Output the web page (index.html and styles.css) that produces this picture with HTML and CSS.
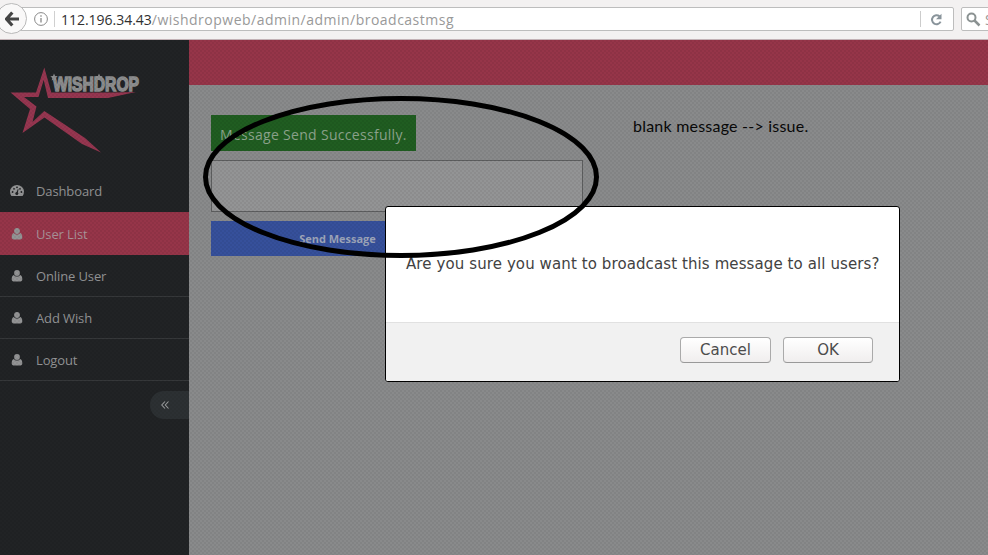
FILE: index.html
```html
<!DOCTYPE html>
<html lang="en">
<head>
<meta charset="utf-8">
<title>Wishdrop admin</title>
<link rel="stylesheet" href="styles.css">
</head>
<body>
<svg width="0" height="0" class="defs">
  <symbol id="user" viewBox="0 0 11 12"><circle cx="5.5" cy="3" r="2.9"/><path d="M2.4 4.9C.8 5.3.2 7 .2 9.3c0 1.300.7 2.200 1.900 2.200h6.800c1.200 0 1.900-.9 1.900-2.200C10.800 7 10.200 5.300 8.600 4.900 7.800 5.900 6.800 6.500 5.500 6.500S3.200 5.900 2.400 4.900Z"/></symbol>
</svg>
<header class="toolbar">
  <div class="back"><svg width="14" height="16" viewBox="0 0 14 16"><path d="M7.300 1.500 1.500 8l5.800 6.500M2 8h12" fill="none" stroke="#444" stroke-width="3.200"/></svg></div>
  <div class="address">
    <svg class="info" width="14" height="14" viewBox="0 0 14 14"><circle cx="7" cy="7" r="6.400" fill="none" stroke="#888"/><path d="M7 6v4.500M7 3.300v1.500" stroke="#888" stroke-width="1.300"/></svg>
    <div class="url"><b>112.196.34.43</b><span>/wishdropweb/admin/admin/broadcastmsg</span></div>
    <div class="reload"><svg width="13" height="13" viewBox="0 0 13 13"><path d="M9.500 3.300A4.500 4.500 0 1 0 10.600 8.600" fill="none" stroke="#89949b" stroke-width="2"/><path d="M11.500.7v5.500H6Z" fill="#89949b"/></svg></div>
  </div>
  <div class="search"><svg width="15" height="15" viewBox="0 0 15 15"><circle cx="5.500" cy="5.500" r="4" fill="none" stroke="#8b9292" stroke-width="2"/><path d="m8.500 8.500 5 5" stroke="#8b9292" stroke-width="2.500"/></svg><span>S</span></div>
</header>
<div class="page">
  <aside class="sidebar">
    <svg class="logo" width="189" height="130" viewBox="0 40 189 130">
      <path fill="#963650" fill-rule="evenodd" d="M44.300 67.500 51.300 92.500H114L136 92 108 98H48L43.700 80 38.500 97H24L36.500 106.500 32.500 122 44.300 111 85 138 101 152.500 82 144 44.500 117.500 22.500 133 30 109 10.500 92.500H36Z"/>
      <path fill="#8c8d8e" d="m54 73.500 1.100 2.400 2.600.3-2 1.800.6 2.600-2.300-1.300-2.300 1.300.6-2.600-2-1.800 2.600-.3ZM99 73.500l1.100 2.400 2.600.3-2 1.800.6 2.600-2.300-1.300-2.300 1.300.6-2.600-2-1.800 2.600-.3Z"/>
      <text class="brand" x="53" y="91.300" textLength="86" lengthAdjust="spacingAndGlyphs">WISHDROP</text>
    </svg>
    <nav>
      <a class="item"><svg width="14" height="12" viewBox="0 0 14 12"><path d="M1.500 11A7 6.800 0 1 1 12.500 11Z"/><g fill="#202224"><circle cx="2.600" cy="7" r=".9"/><circle cx="4" cy="3.800" r=".9"/><circle cx="7" cy="2.300" r=".9"/><circle cx="10" cy="3.800" r=".9"/><circle cx="11.400" cy="7" r=".9"/><circle cx="6.800" cy="8.500" r="1.500"/><path d="m6.300 8 1.500-4 .7.200-.8 4.200Z"/></g></svg><span>Dashboard</span></a>
      <a class="item active"><svg width="14" height="12"><use href="#user"/></svg><span>User List</span></a>
      <a class="item"><svg width="14" height="12"><use href="#user"/></svg><span>Online User</span></a>
      <a class="item"><svg width="14" height="12"><use href="#user"/></svg><span>Add Wish</span></a>
      <a class="item"><svg width="14" height="12"><use href="#user"/></svg><span>Logout</span></a>
    </nav>
    <div class="collapse"><svg width="8" height="8" viewBox="0 0 8 8"><path d="M4 .5.800 4 4 7.500M7.500.5 4.300 4l3.200 3.500" fill="none" stroke="#999b9c" stroke-width="1.100"/></svg></div>
  </aside>
  <main>
    <div class="topbar"></div>
    <div class="content">
      <form>
        <div class="success">Message Send Successfully.</div>
        <div class="message"></div>
        <div class="send">Send Message</div>
      </form>
      <p class="note">blank message --&gt; issue.</p>
    </div>
  </main>
</div>
<div class="texture"></div>
<div class="dialog">
  <div class="question">Are you sure you want to broadcast this message to all users?</div>
  <div class="actions"><button>Cancel</button><button>OK</button></div>
</div>
<svg class="annotation" width="396" height="162"><ellipse cx="198" cy="81" rx="195.500" ry="78.500"/></svg>
</body>
</html>
```
FILE: styles.css
```css
* { box-sizing: border-box; }
body { margin: 0; width: 988px; height: 555px; overflow: hidden; font-family: "Open Sans", sans-serif; display: flex; flex-direction: column; position: relative; background: #868788; }
.defs { position: absolute; }
.toolbar { height: 40px; flex: none; background: #f3f1f1; display: flex; align-items: flex-start; padding-top: 7px; border-bottom: 1px solid #c3b2b6; overflow: hidden; }
.back { width: 31px; height: 31px; border: 1px solid #b9b9b9; border-radius: 50%; background: #f9f8f8; margin: -4px 0 0 -4px; flex: none; display: flex; align-items: center; padding-left: 8px; z-index: 1; }
.address { height: 24px; width: 939px; margin-left: -12px; border: 1px solid #bdbdbd; border-radius: 2px; background: #fff; display: flex; align-items: center; padding-left: 18px; flex: none; }
.info { flex: none; }
.url { flex: 1; margin-left: 6px; border-left: 1px solid #d0d0d0; padding-left: 6px; height: 16px; line-height: 17px; font-size: 14px; color: #999; white-space: nowrap; }
.url b { font-weight: 400; color: #303030; letter-spacing: -.02px; }
.url span { letter-spacing: .49px; }
.reload { width: 33px; height: 16px; border-left: 1px solid #ccc; display: flex; align-items: center; padding-left: 9px; }
.search { height: 24px; width: 100px; margin-left: 7px; flex: none; border: 1px solid #bdbdbd; border-radius: 2px; background: #fff; display: flex; align-items: center; padding-left: 4px; gap: 4px; font-size: 14px; color: #999; }
.page { flex: 1; display: flex; }
.sidebar { width: 189px; background: #212325; color: #939495; display: flex; flex-direction: column; flex: none; }
.logo { display: block; flex: none; }
.brand { font: bold 20px "Liberation Sans", sans-serif; fill: #8c8d8e; stroke: #8c8d8e; stroke-width: 1.5px; }
.item { height: 42px; display: flex; align-items: center; padding-left: 10px; gap: 12px; font-size: 13px; letter-spacing: -.12px; border-bottom: 1px solid #36383a; fill: #939495; }
.item:first-child { height: 43px; border-color: #923448; }
.item.active { background: #963549; border-color: #963549; color: #a99298; }
.item svg { flex: none; overflow: visible; }
.item use { width: 11px; height: 12px; }
.collapse { align-self: flex-end; width: 39px; height: 28px; margin-top: 10px; border-radius: 14px 0 0 14px; background: #2c3033; display: flex; align-items: center; padding-left: 11px; }
main { flex: 1; background: #898a8b; }
.topbar { height: 45px; background: #963549; }
.content { display: flex; padding: 30px 0 0 22px; }
form { width: 372px; }
.success { width: 205px; height: 36px; background: #205d21; color: #8da48d; font-size: 14px; line-height: 39px; padding-left: 9px; white-space: nowrap; letter-spacing: .3px; }
.message { height: 52px; margin-top: 9px; border: 1px solid #5d5e5f; background: #939495; }
.send { width: 253px; height: 35px; margin-top: 9px; background: #36509b; color: #9da5b9; font: bold 11px/36px "Open Sans", sans-serif; letter-spacing: -.03px; text-align: center; }
.note { margin: 1px 0 0 50px; font: 16px/20px Lato, sans-serif; letter-spacing: .22px; color: #080808; white-space: nowrap; }
.texture { position: absolute; left: 0; top: 40px; right: 0; bottom: 0; background: repeating-conic-gradient(rgba(0,0,0,.05) 0 25%, transparent 0 50%) 0 0 / 4px 4px; }
.dialog { position: absolute; left: 385px; top: 206px; width: 515px; height: 176px; border: 1px solid #000; border-radius: 3px; background: #fff; overflow: hidden; font-family: "DejaVu Sans", sans-serif; color: #424242; }
.question { height: 115px; padding: 46px 0 0 20px; font-size: 15px; line-height: 22px; letter-spacing: .1px; white-space: nowrap; }
.actions { height: 59px; border-top: 1px solid #e1e1e1; background: #f1f1f1; display: flex; justify-content: flex-end; gap: 12px; padding: 14px 26px 0 0; }
button { width: 91px; height: 26px; padding: 0 0 1px; border: 1px solid #aaa; border-bottom-color: #999; border-radius: 4px; background: linear-gradient(#fff, #f0eeee); font: 15px "DejaVu Sans", sans-serif; color: #4c4c4c; }
button + button { width: 90px; }
.annotation { position: absolute; left: 203px; top: 96px; fill: none; stroke: #000; stroke-width: 5px; }
```
